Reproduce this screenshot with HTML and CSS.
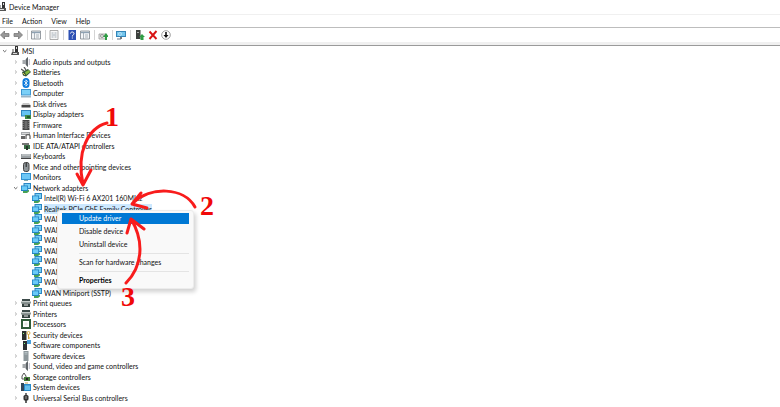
FILE: index.html
```
<!DOCTYPE html>
<html lang="en">

<head>
    <meta charset="UTF-8">
    <meta name="viewport" content="width=device-width, initial-scale=1.0">
    <title>Device Manager</title>
    <link rel="stylesheet" href="styles.css">
</head>

<body>
    <!-- icons -->
    <svg class="sprite" aria-hidden="true">
        <symbol id="i-right" viewBox="0 0 10 10"><path d="M4 3.5 5.6 5 4 6.500" fill="none" stroke="#999" stroke-width=".8" /></symbol>
        <symbol id="i-down" viewBox="0 0 10 10"><path d="M3 4.200 4.700 5.800 6.400 4.200" fill="none" stroke="#555" stroke-width=".9" /></symbol>
        <symbol id="i-pc" viewBox="0 0 10 10"><path d="M5 0h3v7H5z" fill="#333" /><path d="M6 1h1v2H6z" fill="#ddd" /><path d="M1 9l1-3h7v3z" fill="#555" /><path d="M2 3h2v3H2z" fill="#aaa" /><path d="M3 7.500h4" stroke="#ddd" /></symbol>
        <symbol id="i-sound" viewBox="0 0 10 10"><path d="M1.500 3h2.500l3-3v10L4 7H1.500z" fill="#a4a8ab" /><path d="M5 2l2-2v10L5 8z" fill="#5f6468" /><path d="M8.300 2v6" stroke="#aab" stroke-width=".8" /></symbol>
        <symbol id="i-battery" viewBox="0 0 10 10"><path d="M1 5l6-3 3 3-5 4.500-3-1z" fill="#34543a" /><path d="M4 5l4-2 1 2-4 3z" fill="#7fb83f" /><path d="M0 2l3 2M3 0l2 3" stroke="#555" stroke-width="1.300" /><path d="M2 6l2 2" stroke="#d6c34a" /></symbol>
        <symbol id="i-bluetooth" viewBox="0 0 10 10"><rect x="1.500" y="0" width="7" height="10" rx="3.500" fill="#0a78dc" /><path d="M3.200 3.200 6.600 6.500 5 8.200V1.800l1.600 1.700L3.200 6.800" fill="none" stroke="#fff" stroke-width=".8" /></symbol>
        <symbol id="i-computer" viewBox="0 0 10 10"><path d="M0 1h10v6.500H0z" fill="#3d94cf" /><path d="M1 2h8v4.500H1z" fill="#7bd0f7" /><path d="M0 8h10v1.500H0z" fill="#9bb4c4" /></symbol>
        <symbol id="i-disk" viewBox="0 0 10 10"><path d="M2 4h6l1.500 2h-9z" fill="#c8c8c8" /><path d="M.5 6h9v2.500h-9z" fill="#444" /></symbol>
        <symbol id="i-display" viewBox="0 0 10 10"><path d="M0 1h10v6.500H0z" fill="#2f83bd" /><path d="M1 2h8v4.500H1z" fill="#64c3f2" /><path d="M4 6h6v4H4z" fill="#3d8b45" /><path d="M6 7h3v2H6z" fill="#235a31" /></symbol>
        <symbol id="i-firmware" viewBox="0 0 10 10"><path d="M1.500 0h7v10h-7z" fill="#444" /><path d="M3.500 1h3v8h-3z" fill="#6c6c6c" /><path d="M1.500 1.500h1m-1 2h1m-1 2h1m-1 2h1m5-6h1m-1 2h1m-1 2h1m-1 2h1" stroke="#ccc" stroke-width=".7" /></symbol>
        <symbol id="i-hid" viewBox="0 0 10 10"><path d="M0 2h9v3H0z" fill="#a6a9ac" /><path d="M0 6h4v3H0z" fill="#666" /><path d="M5 9V6c0-2 4-2 4 0v3" fill="none" stroke="#666" stroke-width="1.300" /><path d="M1 3.500h7" stroke="#eee" stroke-width=".7" /></symbol>
        <symbol id="i-ide" viewBox="0 0 10 10"><path d="M1 2h7v2H1z" fill="#777" /><path d="M3 4h6v4H3z" fill="#3c7047" /><path d="M5 5h2v4H5z" fill="#26382a" /></symbol>
        <symbol id="i-keyboard" viewBox="0 0 10 10"><path d="M0 3h10v5H0z" fill="#9ba1a4" /><path d="M1 4h8" stroke="#e4e8ea" stroke-width=".8" /><path d="M0 7.500h10" stroke="#444" /></symbol>
        <symbol id="i-mouse" viewBox="0 0 10 10"><rect x="2.500" y=".5" width="5.500" height="9" rx="2" fill="#8d9498" stroke="#444" /><path d="M5.200 1v4" stroke="#222" /></symbol>
        <symbol id="i-monitor" viewBox="0 0 10 10"><path d="M0 1h10v7H0z" fill="#3192d2" /><path d="M1 2h8v5H1z" fill="#6cc6f5" /><path d="M3 8.500h4" stroke="#8aa" /></symbol>
        <symbol id="i-network" viewBox="0 0 10 10"><path d="M2.500 0H10v6H2.500z" fill="#2a86c4" /><path d="M3.500 1H9v4H3.500z" fill="#79cff5" /><path d="M0 2.500h7V8H0z" fill="#2583c2" /><path d="M.8 3.300h5.400V7H.8z" fill="#69cbf8" /><path d="M2 8h4l2-1.500V8.500L6 10H2z" fill="#49a356" /></symbol>
        <symbol id="i-printer" viewBox="0 0 10 10"><path d="M1 1h8v2H1z" fill="#3d4b4a" /><path d="M0 3.500h10v2H0z" fill="#8d9896" /><path d="M1 5.500h8V9H1z" fill="#34413f" /><path d="M3 6.500h4v1H3z" fill="#f2f2f2" /></symbol>
        <symbol id="i-cpu" viewBox="0 0 10 10"><path d="M1 1h8v8H1z" fill="#fff" stroke="#2f5c3a" stroke-width="2" /><path d="M3.500 3.500h3v3h-3z" fill="#e4e8e4" /></symbol>
        <symbol id="i-security" viewBox="0 0 10 10"><path d="M1 1h4.500v9H1z" fill="#2b2f2c" /><path d="M2 3h1v1H2z" fill="#8f8" /><circle cx="7.500" cy="3" r="1.500" fill="none" stroke="#d8ae45" /><path d="M7.500 4v5M7.500 8H9" stroke="#d8ae45" /></symbol>
        <symbol id="i-component" viewBox="0 0 10 10"><path d="M2 1h4v9H2z" fill="#2b2f33" /><path d="M3 3h1v1H3z" fill="#8f8" /><path d="M6 0h4v4H6z" fill="#4aa0dc" /></symbol>
        <symbol id="i-softdev" viewBox="0 0 10 10"><path d="M2.500 0h5v10h-5z" fill="#8d979b" /><path d="M3.500 1.500h3M3.500 3h3" stroke="#c8d2d6" stroke-width=".7" /></symbol>
        <symbol id="i-storage" viewBox="0 0 10 10"><path d="M1 4l2-3 2 3v3H1z" fill="none" stroke="#555" /><path d="M3 5h6v4H3z" fill="#447a3a" /><path d="M5 6h2v2H5z" fill="#222" /></symbol>
        <symbol id="i-system" viewBox="0 0 10 10"><path d="M0 1h3v8H0z" fill="#31475a" /><path d="M3 2h7v7H3z" fill="#298bcb" /><path d="M4 3.500h5V8H4z" fill="#65c0ee" /><path d="M4 1h3" stroke="#caa95a" /></symbol>
        <symbol id="i-usb" viewBox="0 0 10 10"><path d="M4 0h2v2H4z" fill="#777" /><rect x="2.500" y="2" width="5" height="5.500" rx="1.500" fill="#333" /><path d="M5 7v3" stroke="#222" stroke-width="1.400" /><path d="M5 3v3" stroke="#bbb" stroke-width=".8" /></symbol>
        <symbol id="i-back" viewBox="0 0 10 10"><path d="M.5 5l4-4v2.500H9v3H4.500V9z" fill="#999" stroke="#6d6d6d" stroke-width=".7" /></symbol>
        <symbol id="i-forward" viewBox="0 0 10 10"><path d="M9.500 5l-4-4v2.500H1v3h4.500V9z" fill="#999" stroke="#6d6d6d" stroke-width=".7" /></symbol>
        <symbol id="i-panel" viewBox="0 0 10 10"><path d="M.5 1h9v8h-9z" fill="#f4f6f8" stroke="#7d858b" stroke-width=".8" /><path d="M1 2.500h8" stroke="#8ea2b3" stroke-width="1.400" /><path d="M3.500 3v6M5 5h3M5 7h3" stroke="#8b969f" stroke-width=".7" /></symbol>
        <symbol id="i-props" viewBox="0 0 10 10"><path d="M1 .5h8v9H1z" fill="#f7f7f7" stroke="#999" stroke-width=".8" /><path d="M2.500 3h2M5.500 3h2M2.500 5h5M2.500 7h2M5.500 7h2" stroke="#8d9aa5" stroke-width=".8" /></symbol>
        <symbol id="i-help" viewBox="0 0 10 10"><path d="M1.500 0h7.500v10H1.500z" fill="#2d50b4" /><path d="M3.500 3.500c0-2 3.500-2 3.500 0 0 1.500-1.700 1.300-1.700 3M5.300 7.500v1" fill="none" stroke="#fff" /></symbol>
        <symbol id="i-update" viewBox="0 0 10 10"><path d="M1 4h7v5H1z" fill="#e8e8e8" stroke="#999" stroke-width=".8" /><circle cx="4" cy="6" r="1.500" fill="none" stroke="#999" /><path d="M7 10V7H5l3-4 3 4H9v3z" fill="#2f9d45" /></symbol>
        <symbol id="i-scan" viewBox="0 0 10 10"><path d="M0 1h10v6H0z" fill="#3585b8" /><path d="M1 2h8v4H1z" fill="#74c5ec" /><path d="M4 7h2v2H4z" fill="#777" /><path d="M1 9h4" stroke="#678" /><circle cx="4" cy="4" r="1.500" fill="none" stroke="#dff3ff" stroke-width=".6" /></symbol>
        <symbol id="i-enable" viewBox="0 0 10 10"><path d="M1 0h4.500v9H1z" fill="#3c403d" /><path d="M2 2h2v1H2z" fill="#aaa" /><path d="M5.500 10V7H4l3-3 3 3H8.500v3z" fill="#2f9d45" /></symbol>
        <symbol id="i-remove" viewBox="0 0 10 10"><path d="M1.500 1.500l7 7.500M8.500 1 1.500 9" stroke="#d81414" stroke-width="1.900" /></symbol>
        <symbol id="i-disable" viewBox="0 0 10 10"><circle cx="5" cy="5" r="4.300" fill="#fff" stroke="#777" stroke-width=".7" /><path d="M4.200 2h1.600v3h1.700L5 8 2.500 5h1.700z" fill="#111" /></symbol>
    </svg>

    <div class="window">
        <header class="titlebar">
            <svg class="icon title_icon"><use href="#i-pc" /></svg>
            <h1>Device Manager</h1>
        </header>
        <nav class="menubar">
            <button type="button">File</button>
            <button type="button">Action</button>
            <button type="button">View</button>
            <button type="button">Help</button>
        </nav>
        <div class="toolbar">
            <div class="group">
                <button type="button" aria-label="Back"><svg class="icon"><use href="#i-back" /></svg></button>
                <button type="button" aria-label="Forward"><svg class="icon"><use href="#i-forward" /></svg></button>
            </div>
            <div class="group">
                <button type="button" aria-label="Show console tree"><svg class="icon"><use href="#i-panel" /></svg></button>
            </div>
            <div class="group">
                <button type="button" aria-label="Properties"><svg class="icon"><use href="#i-props" /></svg></button>
            </div>
            <div class="group">
                <button type="button" aria-label="Help"><svg class="icon"><use href="#i-help" /></svg></button>
                <button type="button" aria-label="Show action pane"><svg class="icon"><use href="#i-panel" /></svg></button>
            </div>
            <div class="group">
                <button type="button" aria-label="Update driver"><svg class="icon"><use href="#i-update" /></svg></button>
            </div>
            <div class="group">
                <button type="button" aria-label="Scan for hardware changes"><svg class="icon"><use href="#i-scan" /></svg></button>
            </div>
            <div class="group">
                <button type="button" aria-label="Enable device"><svg class="icon"><use href="#i-enable" /></svg></button>
                <button type="button" aria-label="Uninstall device"><svg class="icon"><use href="#i-remove" /></svg></button>
                <button type="button" aria-label="Disable device"><svg class="icon"><use href="#i-disable" /></svg></button>
            </div>
        </div>

        <ul class="tree">
            <li>
                <div class="row"><button type="button" class="toggle" aria-label="Collapse"><svg class="icon"><use href="#i-down" /></svg></button><svg class="icon"><use href="#i-pc" /></svg><span>MSI</span></div>
                <ul>
                    <li class="row"><button type="button" class="toggle" aria-label="Expand"><svg class="icon"><use href="#i-right" /></svg></button><svg class="icon"><use href="#i-sound" /></svg><span>Audio inputs and outputs</span></li>
                    <li class="row"><button type="button" class="toggle" aria-label="Expand"><svg class="icon"><use href="#i-right" /></svg></button><svg class="icon"><use href="#i-battery" /></svg><span>Batteries</span></li>
                    <li class="row"><button type="button" class="toggle" aria-label="Expand"><svg class="icon"><use href="#i-right" /></svg></button><svg class="icon"><use href="#i-bluetooth" /></svg><span>Bluetooth</span></li>
                    <li class="row"><button type="button" class="toggle" aria-label="Expand"><svg class="icon"><use href="#i-right" /></svg></button><svg class="icon"><use href="#i-computer" /></svg><span>Computer</span></li>
                    <li class="row"><button type="button" class="toggle" aria-label="Expand"><svg class="icon"><use href="#i-right" /></svg></button><svg class="icon"><use href="#i-disk" /></svg><span>Disk drives</span></li>
                    <li class="row"><button type="button" class="toggle" aria-label="Expand"><svg class="icon"><use href="#i-right" /></svg></button><svg class="icon"><use href="#i-display" /></svg><span>Display adapters</span></li>
                    <li class="row"><button type="button" class="toggle" aria-label="Expand"><svg class="icon"><use href="#i-right" /></svg></button><svg class="icon"><use href="#i-firmware" /></svg><span>Firmware</span></li>
                    <li class="row"><button type="button" class="toggle" aria-label="Expand"><svg class="icon"><use href="#i-right" /></svg></button><svg class="icon"><use href="#i-hid" /></svg><span>Human Interface Devices</span></li>
                    <li class="row"><button type="button" class="toggle" aria-label="Expand"><svg class="icon"><use href="#i-right" /></svg></button><svg class="icon"><use href="#i-ide" /></svg><span>IDE ATA/ATAPI controllers</span></li>
                    <li class="row"><button type="button" class="toggle" aria-label="Expand"><svg class="icon"><use href="#i-right" /></svg></button><svg class="icon"><use href="#i-keyboard" /></svg><span>Keyboards</span></li>
                    <li class="row"><button type="button" class="toggle" aria-label="Expand"><svg class="icon"><use href="#i-right" /></svg></button><svg class="icon"><use href="#i-mouse" /></svg><span>Mice and other pointing devices</span></li>
                    <li class="row"><button type="button" class="toggle" aria-label="Expand"><svg class="icon"><use href="#i-right" /></svg></button><svg class="icon"><use href="#i-monitor" /></svg><span>Monitors</span></li>
                    <li>
                        <div class="row"><button type="button" class="toggle" aria-label="Collapse"><svg class="icon"><use href="#i-down" /></svg></button><svg class="icon"><use href="#i-network" /></svg><span>Network adapters</span></div>
                        <ul class="devices">
                            <li class="row"><svg class="icon"><use href="#i-network" /></svg><span>Intel(R) Wi-Fi 6 AX201 160MHz</span></li>
                            <li class="row"><svg class="icon"><use href="#i-network" /></svg><span class="selected">Realtek PCIe GbE Family Controller</span></li>
                            <li class="row"><svg class="icon"><use href="#i-network" /></svg><span>WAN</span></li>
                            <li class="row"><svg class="icon"><use href="#i-network" /></svg><span>WAN</span></li>
                            <li class="row"><svg class="icon"><use href="#i-network" /></svg><span>WAN</span></li>
                            <li class="row"><svg class="icon"><use href="#i-network" /></svg><span>WAN</span></li>
                            <li class="row"><svg class="icon"><use href="#i-network" /></svg><span>WAN</span></li>
                            <li class="row"><svg class="icon"><use href="#i-network" /></svg><span>WAN</span></li>
                            <li class="row"><svg class="icon"><use href="#i-network" /></svg><span>WAN</span></li>
                            <li class="row"><svg class="icon"><use href="#i-network" /></svg><span>WAN Miniport (SSTP)</span></li>
                        </ul>
                    </li>
                    <li class="row"><button type="button" class="toggle" aria-label="Expand"><svg class="icon"><use href="#i-right" /></svg></button><svg class="icon"><use href="#i-printer" /></svg><span>Print queues</span></li>
                    <li class="row"><button type="button" class="toggle" aria-label="Expand"><svg class="icon"><use href="#i-right" /></svg></button><svg class="icon"><use href="#i-printer" /></svg><span>Printers</span></li>
                    <li class="row"><button type="button" class="toggle" aria-label="Expand"><svg class="icon"><use href="#i-right" /></svg></button><svg class="icon"><use href="#i-cpu" /></svg><span>Processors</span></li>
                    <li class="row"><button type="button" class="toggle" aria-label="Expand"><svg class="icon"><use href="#i-right" /></svg></button><svg class="icon"><use href="#i-security" /></svg><span>Security devices</span></li>
                    <li class="row"><button type="button" class="toggle" aria-label="Expand"><svg class="icon"><use href="#i-right" /></svg></button><svg class="icon"><use href="#i-component" /></svg><span>Software components</span></li>
                    <li class="row"><button type="button" class="toggle" aria-label="Expand"><svg class="icon"><use href="#i-right" /></svg></button><svg class="icon"><use href="#i-softdev" /></svg><span>Software devices</span></li>
                    <li class="row"><button type="button" class="toggle" aria-label="Expand"><svg class="icon"><use href="#i-right" /></svg></button><svg class="icon"><use href="#i-sound" /></svg><span>Sound, video and game controllers</span></li>
                    <li class="row"><button type="button" class="toggle" aria-label="Expand"><svg class="icon"><use href="#i-right" /></svg></button><svg class="icon"><use href="#i-storage" /></svg><span>Storage controllers</span></li>
                    <li class="row"><button type="button" class="toggle" aria-label="Expand"><svg class="icon"><use href="#i-right" /></svg></button><svg class="icon"><use href="#i-system" /></svg><span>System devices</span></li>
                    <li class="row"><button type="button" class="toggle" aria-label="Expand"><svg class="icon"><use href="#i-right" /></svg></button><svg class="icon"><use href="#i-usb" /></svg><span>Universal Serial Bus controllers</span></li>
                </ul>
            </li>
        </ul>

        <!-- right click menu -->
        <div class="context">
            <button type="button" class="active">Update driver</button>
            <button type="button">Disable device</button>
            <button type="button">Uninstall device</button>
            <hr>
            <button type="button">Scan for hardware changes</button>
            <hr>
            <button type="button" class="default">Properties</button>
        </div>

        <!-- numbered steps -->
        <svg class="steps" width="230" height="320" viewBox="0 0 230 320">
            <path d="M107 123C88 128 76 152 83 184M77 174l6 11 8-15" />
            <path d="M195 207C184 187 150 186 133 203M141 193l-9 11 15 4" />
            <path d="M126 283C142 267 145 242 131 219M127 233l4-14 13 10" />
            <text x="105" y="126">1</text>
            <text x="200" y="215">2</text>
            <text x="121" y="306">3</text>
        </svg>
    </div>
</body>

</html>
```
FILE: styles.css
```
* {
    margin: 0;
    padding: 0;
    box-sizing: border-box;
}

body {
    font-family: Lato, "Open Sans", sans-serif;
    font-size: 7px;
    line-height: 1.5;
    color: #111;
    background-color: #fff;
}

ul {
    list-style: none;
}

button {
    border: none;
    background: none;
    font: inherit;
    color: inherit;
    text-align: left;
}

.sprite {
    display: none;
}

.icon {
    display: block;
    flex: none;
    width: 10px;
    height: 10px;
}

.window {
    position: relative;
}

.titlebar {
    display: flex;
    align-items: center;
    height: 15px;
    border-bottom: 1px solid #f0f0f0;
}

.titlebar h1 {
    font-size: 7px;
    font-weight: normal;
}

.title_icon {
    margin-left: -3px;
    margin-right: 2px;
}

.menubar {
    display: flex;
    gap: 9px;
    height: 13px;
    padding-left: 2px;
    border-bottom: 1px solid #bdbdbd;
}

.toolbar {
    display: flex;
    align-items: center;
    height: 18px;
    padding-bottom: 3px;
    border-bottom: 1px solid #9a9a9a;
    background: linear-gradient(#fff 14px, #f0f0f0 14px);
}

.group {
    display: flex;
    gap: 3px;
    padding: 0 4px 0 3px;
    border-right: 1px solid #d4d4d4;
}

.group:first-child {
    padding-left: 0;
}

.group:last-child {
    border-right: none;
    padding-left: 4px;
}

.tree ul {
    padding-left: 11px;
}

.row {
    display: flex;
    align-items: center;
    gap: 2px;
    height: 1.5em;
}

.toggle {
    width: 8px;
}

.devices .row {
    padding-left: 10px;
}

.selected {
    background-color: #cce8ff;
}

.context {
    position: absolute;
    top: 210px;
    left: 57px;
    display: flex;
    flex-direction: column;
    gap: 2px;
    width: 137px;
    padding: 2px 4px;
    border: 1px solid #ececec;
    border-radius: 3px;
    background-color: #f9f9f9;
    box-shadow: 2px 3px 4px rgba(0, 0, 0, .18);
}

.context button {
    height: 11px;
    padding-left: 17px;
}

.context .active {
    color: #fff;
    background-color: #0078d4;
}

.context .default {
    font-weight: bold;
    color: #000;
}

.context hr {
    margin: 1px 0 1px 17px;
    border: none;
    border-top: 1px solid #e4e4e4;
}

.steps {
    position: absolute;
    top: 0;
    left: 0;
    pointer-events: none;
}

.steps path {
    fill: none;
    stroke: #f81c1c;
    stroke-width: 3;
    stroke-linecap: round;
    stroke-linejoin: round;
}

.steps text {
    font-family: "Liberation Serif", serif;
    font-size: 28px;
    font-weight: bold;
    fill: #f00808;
}
```
